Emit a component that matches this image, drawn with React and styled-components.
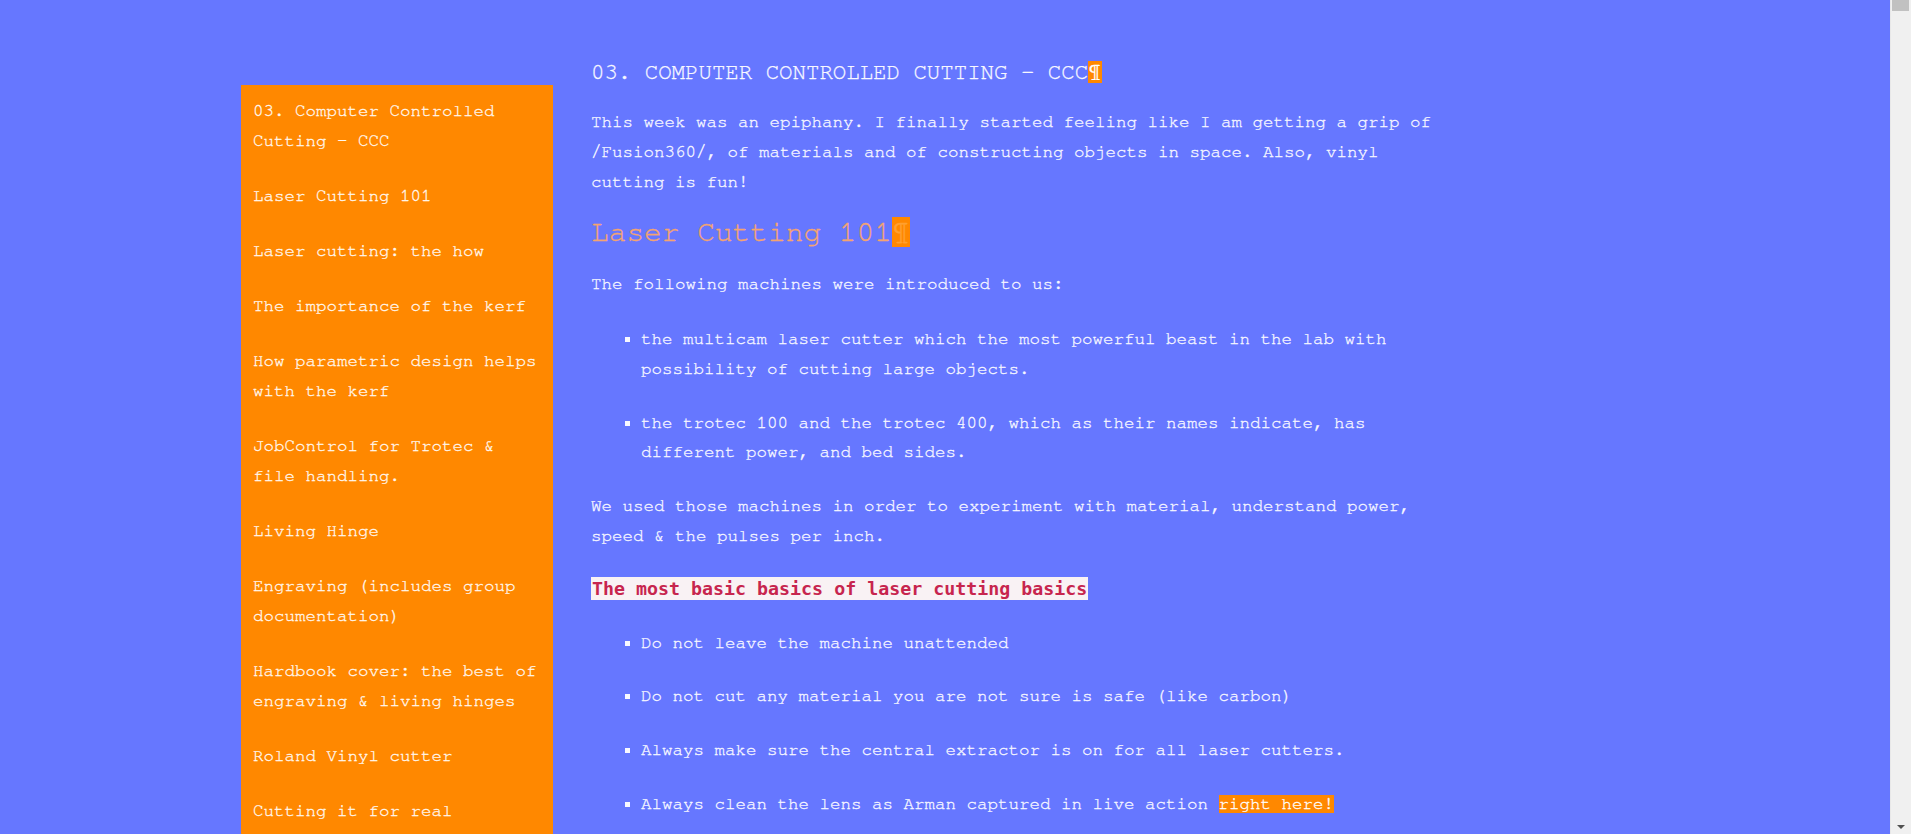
import { createGlobalStyle, styled } from "styled-components";

const GlobalStyle = createGlobalStyle`
  html, body {
    margin: 0;
    padding: 0;
    background: #6677ff;
  }
  body {
    font-family: "Nimbus Mono PS", "Nimbus Mono L", "FreeMono", "Courier New", "Liberation Mono", monospace;
    font-size: 17.5px;
    color: #f8f8ff;
    -webkit-text-stroke: 0.3px currentColor;
  }
`;

const Page = styled.div`
  display: flex;
  align-items: flex-start;
  gap: 38px;
  padding-left: 241px;
`;

const Sidebar = styled.nav`
  width: 312px;
  box-sizing: border-box;
  margin-top: 85px;
  padding: 11px 12px 24px;
  background: #ff8800;
  display: flex;
  flex-direction: column;
  gap: 25px;
`;

const NavLink = styled.a`
  color: #fff8f0;
  text-decoration: none;
  line-height: 30px;
  cursor: pointer;
`;

const Main = styled.main`
  width: 860px;
  padding-top: 57px;
  padding-bottom: 120px;
`;

const Anchor = styled.span`
  background: #ff8800;
  font-size: ${(p) => p.$size || "1em"};
  color: ${(p) => p.$color || "inherit"};
`;

const Title = styled.h1`
  margin: 0;
  font-size: 22.4px;
  font-weight: normal;
  line-height: 30px;
  text-transform: uppercase;
`;

const Para = styled.p`
  margin: 24px 0 0;
  line-height: 1.7;

  ${Title} + & {
    margin-top: 21px;
  }
`;

const CodePara = styled(Para)`
  line-height: 28px;
`;

const SectionHeading = styled.h2`
  margin: 17px 0 0;
  font-size: 29.5px;
  font-weight: normal;
  line-height: 36px;
  color: #f4a470;

  & + ${Para} {
    margin-top: 20px;
  }
`;

const List = styled.ul`
  margin: 25px 0 0;
  padding-left: 50px;
  list-style: square;
`;

const Item = styled.li`
  line-height: 1.7;

  & + & {
    margin-top: 24px;
  }
`;

const Code = styled.code`
  font-family: "DejaVu Sans Mono", monospace;
  font-weight: bold;
  font-size: 18.3px;
  line-height: 1;
  color: #c7254e;
  background: #f9f2f4;
  padding: 1px 1px;
  -webkit-text-stroke: 0;
`;

const Highlight = styled.a`
  background: #ff8800;
  color: #ffffff;
  text-decoration: none;
`;

/* the window's scrollbar, as it shows in the screenshot */
const ScrollTrack = styled.div`
  position: fixed;
  top: 0;
  right: 0;
  bottom: 0;
  width: 21px;
  background: #f0f0f0;
  border-left: 1px solid #e8e8e8;
  box-sizing: border-box;
`;

const ScrollThumb = styled.div`
  margin: 0 2px 0 1px;
  height: 11px;
  background: #c1c1c1;
`;

const ScrollArrow = styled.div`
  position: absolute;
  bottom: 5px;
  left: 6px;
  width: 0;
  height: 0;
  border-left: 4px solid transparent;
  border-right: 4px solid transparent;
  border-top: 4px solid #505050;
`;

const navItems = [
  "03. Computer Controlled Cutting – CCC",
  "Laser Cutting 101",
  "Laser cutting: the how",
  "The importance of the kerf",
  "How parametric design helps with the kerf",
  "JobControl for Trotec & file handling.",
  "Living Hinge",
  "Engraving (includes group documentation)",
  "Hardbook cover: the best of engraving & living hinges",
  "Roland Vinyl cutter",
  "Cutting it for real",
  "Files",
];

export default function App() {
  return (
    <>
      <GlobalStyle />
      <Page>
        <Sidebar>
          {navItems.map((t) => (
            <NavLink key={t}>{t}</NavLink>
          ))}
        </Sidebar>
        <Main>
          <Title>
            03. Computer Controlled Cutting – CCC<Anchor $color="#ffffff">¶</Anchor>
          </Title>
          <Para>
            This week was an epiphany. I finally started feeling like I am getting a grip of
            /Fusion360/, of materials and of constructing objects in space. Also, vinyl cutting
            is fun!
          </Para>
          <SectionHeading>
            Laser Cutting 101<Anchor $color="#ffa030">¶</Anchor>
          </SectionHeading>
          <Para>The following machines were introduced to us:</Para>
          <List>
            <Item>
              the multicam laser cutter which the most powerful beast in the lab with
              possibility of cutting large objects.
            </Item>
            <Item>
              the trotec 100 and the trotec 400, which as their names indicate, has different
              power, and bed sides.
            </Item>
          </List>
          <Para>
            We used those machines in order to experiment with material, understand power,
            speed &amp; the pulses per inch.
          </Para>
          <CodePara>
            <Code>The most basic basics of laser cutting basics</Code>
          </CodePara>
          <List>
            <Item>Do not leave the machine unattended</Item>
            <Item>Do not cut any material you are not sure is safe (like carbon)</Item>
            <Item>Always make sure the central extractor is on for all laser cutters.</Item>
            <Item>
              Always clean the lens as Arman captured in live action{" "}
              <Highlight>right here!</Highlight>
            </Item>
          </List>
          <Para>
            Once the basics are covered, the settings of each machine depend on the material
            and its thickness.
          </Para>
        </Main>
      </Page>
      <ScrollTrack>
        <ScrollThumb />
        <ScrollArrow />
      </ScrollTrack>
    </>
  );
}
